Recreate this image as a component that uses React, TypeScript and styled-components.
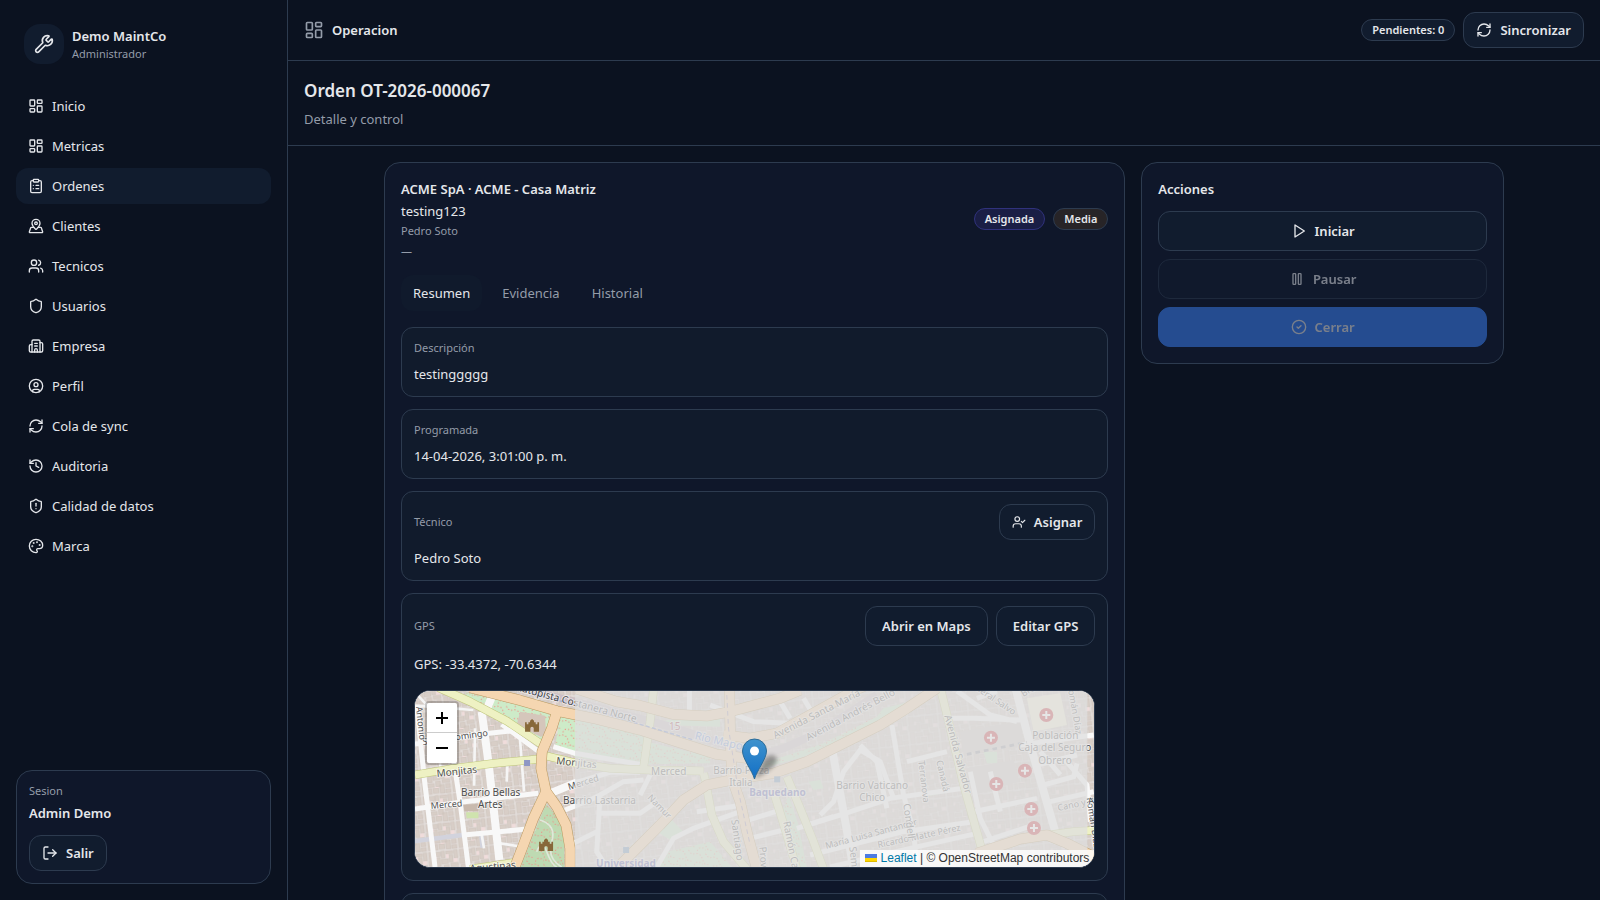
import React from "react";
import styled, { createGlobalStyle, css } from "styled-components";
import {
  Building2,
  CircleCheck,
  CircleUser,
  ClipboardList,
  History,
  LayoutDashboard,
  LogOut,
  MapPinned,
  Palette,
  RefreshCw,
  Shield,
  ShieldAlert,
  UserCheck,
  Users,
  Wrench,
} from "lucide-react";

const color = {
  page: "#0b1220",
  card: "#0f172a",
  raised: "#111c2e",
  border: "#2d3b4f",
  text: "#e5e7eb",
  muted: "#949ca9",
  primary: "#3b82f6",
};

const GlobalStyle = createGlobalStyle`
  *, *::before, *::after { box-sizing: border-box; }
  body {
    margin: 0;
    background: ${color.page};
    color: ${color.text};
    font-family: "Segoe UI", "Noto Sans", sans-serif;
    font-size: 13px;
    line-height: 20px;
  }
  h1, h2, h3, p, ul, dl, dd { margin: 0; padding: 0; }
  button { font: inherit; color: inherit; cursor: pointer; }
`;

/* ---------- Shell ---------- */

const Shell = styled.div`
  display: grid;
  grid-template-columns: 288px minmax(0, 1fr);
  height: 100vh;
`;

const Sidebar = styled.aside`
  display: flex;
  flex-direction: column;
  min-height: 0;
  padding: 16px;
  border-right: 1px solid ${color.border};
`;

const Brand = styled.div`
  display: flex;
  align-items: center;
  gap: 8px;
  padding: 8px;
`;

const BrandMark = styled.div`
  display: grid;
  place-items: center;
  width: 40px;
  height: 40px;
  border-radius: 16px;
  background: ${color.raised};
`;

const Strong = styled.div`
  font-weight: 600;
`;

const Small = styled.div`
  font-size: 11px;
  line-height: 16px;
  color: ${color.muted};
`;

const NavList = styled.ul`
  display: flex;
  flex: 1;
  flex-direction: column;
  gap: 4px;
  margin-top: 16px;
  list-style: none;
`;

const NavLink = styled.a<{ $active?: boolean }>`
  display: flex;
  align-items: center;
  gap: 8px;
  padding: 8px 12px;
  border-radius: 12px;
  color: ${color.text};
  text-decoration: none;
  background: ${(p) => (p.$active ? color.raised : "transparent")};
`;

const Session = styled.section`
  display: flex;
  flex-direction: column;
  align-items: flex-start;
  padding: 12px;
  border: 1px solid ${color.border};
  border-radius: 16px;
  background: ${color.card};
`;

const SessionUser = styled(Strong)`
  margin: 4px 0 12px;
`;

const Button = styled.button<{ $size?: "sm" | "md"; $primary?: boolean }>`
  display: inline-flex;
  align-items: center;
  justify-content: center;
  gap: 8px;
  height: ${(p) => (p.$size === "sm" ? 36 : 40)}px;
  padding: 0 ${(p) => (p.$size === "sm" ? 12 : 16)}px;
  border: 1px solid ${(p) => (p.$primary ? color.primary : color.border)};
  border-radius: 12px;
  background: ${(p) => (p.$primary ? color.primary : color.raised)};
  font-weight: 600;
  white-space: nowrap;
  &:disabled {
    opacity: 0.5;
    cursor: default;
  }
`;

/* ---------- Main column ---------- */

const Main = styled.main`
  min-width: 0;
  overflow-y: auto;
  scrollbar-width: none;
`;

const TopBar = styled.header`
  display: flex;
  align-items: center;
  justify-content: space-between;
  padding: 12px 16px;
  border-bottom: 1px solid ${color.border};
`;

const Row = styled.div`
  display: flex;
  align-items: center;
  gap: 8px;
`;

const MutedIcon = styled.span`
  display: flex;
  color: ${color.muted};
`;

const Badge = styled.span<{ $tone?: "assigned" | "medium" }>`
  padding: 2px 10px;
  border: 1px solid ${color.border};
  border-radius: 999px;
  background: ${color.raised};
  font-size: 11px;
  line-height: 16px;
  font-weight: 600;
  ${(p) =>
    p.$tone === "assigned" &&
    css`
      border-color: #30327c;
      background: #1a1e45;
    `}
  ${(p) =>
    p.$tone === "medium" &&
    css`
      background: #272427;
    `}
`;

const PageHead = styled.div`
  padding: 16px;
  border-bottom: 1px solid ${color.border};
`;

const Title = styled.h1`
  font-size: 17px;
  line-height: 28px;
  font-weight: 600;
`;

const Subtitle = styled.p`
  margin-top: 4px;
  color: ${color.muted};
`;

const Content = styled.div`
  display: grid;
  grid-template-columns: repeat(3, minmax(0, 1fr));
  align-items: start;
  gap: 16px;
  max-width: 1152px;
  margin: 0 auto;
  padding: 16px;
`;

const Card = styled.section<{ $wide?: boolean }>`
  grid-column: span ${(p) => (p.$wide ? 2 : 1)};
  padding: 16px;
  border: 1px solid ${color.border};
  border-radius: 16px;
  background: ${color.card};
`;

const CardHead = styled.div`
  display: flex;
  align-items: center;
  justify-content: space-between;
`;

const Heading = styled.h2`
  font-size: 13px;
  line-height: 20px;
  font-weight: 600;
`;

const OrderInfo = styled.div`
  display: flex;
  flex-direction: column;
  gap: 2px;
`;

const Schedule = styled(Small)`
  padding-top: 2px;
`;

const Tabs = styled.div`
  display: flex;
  gap: 8px;
  margin: 16px 0;
`;

const Tab = styled.button`
  height: 36px;
  padding: 0 12px;
  border: 0;
  border-radius: 12px;
  background: transparent;
  color: ${color.muted};
  &[aria-selected="true"] {
    background: #101a2c;
    color: ${color.text};
  }
`;

const Panels = styled.div`
  display: flex;
  flex-direction: column;
  gap: 12px;
`;

const Panel = styled.section`
  padding: 12px;
  border: 1px solid ${color.border};
  border-radius: 12px;
  background: #111b2c;
`;

const PanelValue = styled.p`
  margin-top: 8px;
`;

const Actions = styled.div`
  display: grid;
  gap: 8px;
  margin-top: 12px;
`;

/* ---------- Map ---------- */

const MapFrame = styled.div`
  position: relative;
  height: 178px;
  margin-top: 16px;
  overflow: hidden;
  border: 1px solid ${color.border};
  border-radius: 16px;
  background: #ddd;
`;

const MapCanvas = styled.svg`
  display: block;
  width: 100%;
  height: 100%;
`;

const ZoomControl = styled.div`
  position: absolute;
  top: 10px;
  left: 10px;
  border: 2px solid rgba(0, 0, 0, 0.2);
  border-radius: 4px;
  background-clip: padding-box;
`;

const ZoomButton = styled.button`
  display: grid;
  place-items: center;
  width: 30px;
  height: 30px;
  padding: 0;
  border: 0;
  border-radius: 0 0 2px 2px;
  background: #fff;
  color: #000;
  &:first-child {
    border-bottom: 1px solid #ccc;
    border-radius: 2px 2px 0 0;
  }
`;

const Marker = styled.svg`
  position: absolute;
  top: 47px;
  left: calc(50% - 13px);
`;

const Attribution = styled.div`
  position: absolute;
  right: 0;
  bottom: 0;
  padding: 0 5px;
  background: rgba(255, 255, 255, 0.8);
  color: #333;
  font-family: "Liberation Sans", Arial, sans-serif;
  font-size: 12px;
  line-height: 17px;
  a {
    color: #0078a8;
    text-decoration: none;
  }
  svg {
    margin-right: 4px;
  }
`;

type RoadKind = "street" | "secondary" | "primary" | "lane";

const roadStyle: Record<RoadKind, { fill: string; edge: string; width: number }> = {
  street: { fill: "#f8f8f8", edge: "#d5cec8", width: 15 },
  lane: { fill: "#f5f5f5", edge: "#d5cec8", width: 8 },
  secondary: { fill: "#eef1c3", edge: "#bfc67c", width: 22 },
  primary: { fill: "#f5d6b1", edge: "#b99a62", width: 29 },
};

const roads: [RoadKind, string][] = [
  ["lane", "M195 130L192 302M90 235L92 250M292 240L290 290M330 165L342 320M270 475L342 486M215 450L222 490M15 62L190 75M15 22L60 70"],
  ["street", "M15 372L150 352L385 325M15 177L190 150L325 135M160 450L375 430M20 60L45 300L75 546M125 190L150 350L175 546M275 118L395 206"],
  ["street", "M420 328L500 292L600 262L690 262M465 375L540 345L570 330L640 290L700 285M570 330L560 500L590 546M490 475L560 440M430 185L495 205L700 240"],
  ["street", "M565 385H690L740 350M690 330L720 270M740 546L790 460L850 430L990 380M860 380L1000 360M1000 410L1110 375M1020 460L1120 435M890 270L875 300"],
  ["street", "M838 18V85M1110 50L1140 100M1180 40L1210 90M900 60L1030 110L1140 115M1190 420L1290 390L1440 340L1660 310M1230 390L1270 350L1300 260L1350 195L1410 230L1450 340"],
  ["street", "M1160 430L1270 395M1200 510L1480 440L1690 410M1260 546L1500 490L1700 445M1445 120L1480 330L1510 440L1520 546M1490 230L1610 200M1350 180L1400 230L1430 370"],
  ["street", "M1620 100H1690L1830 105M1640 18L1740 90L1820 110M1830 180L2050 150M1880 240L2000 210M1900 300L1990 275L2000 235M1920 350L2050 320M1720 470L1870 420M1760 18L1700 40"],
  ["street", "M1680 260L1710 400L1750 480M1740 260L1770 380M1690 380L1880 340M1890 200L1950 270M1960 220L2030 300L2040 410"],
  ["secondary", "M85 8L180 50L290 108L400 182"],
  ["secondary", "M15 270L120 252L250 235L390 222M410 213L500 235L600 250L720 255L880 258M180 552L330 530"],
  ["secondary", "M730 18L720 110L700 250M890 310L905 390L940 470L1010 552M1090 320L1115 400L1160 552M1130 275L1170 370L1210 470L1240 552M880 265L890 300"],
  ["secondary", "M1590 8L1615 110L1660 300L1715 495M1910 450L1990 440L2052 436"],
  ["primary", "M500 12L620 50L690 62L790 88L890 93L960 80L1110 40L1170 15"],
  ["primary", "M180 8L330 46L440 78L560 102L690 135L800 170L920 208L1010 220"],
  ["primary", "M958 8L960 130L965 280L990 350L1010 440L1040 552"],
  ["primary", "M940 150L1020 160L1100 145L1200 90L1330 18L1370 0"],
  ["primary", "M440 82L425 130L396 200L393 250L408 320L370 400L340 480L312 552M408 320L440 365L468 420L480 490V552"],
  ["primary", "M600 570L680 490L750 420L820 345L890 300L990 280L1090 265L1190 230L1290 180L1410 120L1490 70L1580 10"],
  ["primary", "M1700 505L1830 462L1910 450L1970 475L2060 520"],
];

const wideStreets = "M215 80L235 230L268 525M247 32L228 78M1268 205L1300 380L1330 552M1815 8L1860 180L1945 475M420 325L500 292";

type Label = [text: string, x: number, y: number, size: number, angle: number, tone?: string, bold?: boolean];

const labels: Label[] = [
  ["Autopista Costanera Norte", 100, -1, 10, 15, "#444"],
  ["Monjitas", 22, 86, 10, -6],
  ["Monjitas", 141, 73, 10, 6],
  ["Barrio Bellas", 46, 105, 10, 0],
  ["Artes", 63, 117, 10, 0],
  ["Merced", 16, 118, 9, -5],
  ["Merced", 154, 99, 9, -17],
  ["Santo Domingo", 8, 54, 9, -8],
  ["Antonio", 1, 16, 9, 84],
  ["Agustinas", 55, 181, 10, -5],
  ["Barrio Lastarria", 148, 113, 10, 0],
  ["Universidad", 181, 176, 10, 0, "#5c5fae", true],
  ["15", 254, 39, 10, 0, "#a33a48"],
  ["Río Mapocho", 279, 48, 11, 13, "#6c8fd6"],
  ["Merced", 236, 84, 10, 0],
  ["Barrio Plaza", 298, 83, 10, 0],
  ["Italia", 314, 95, 10, 0],
  ["Baquedano", 334, 105, 10, 0, "#5c5fae", true],
  ["Namur", 232, 107, 9, 46],
  ["Santiago", 316, 129, 10, 82],
  ["Provi", 344, 156, 10, 85],
  ["Ramón Carnicer", 368, 131, 10, 79],
  ["Avenida Santa María", 360, 48, 10, -27],
  ["Avenida Andrés Bello", 393, 50, 10, -28],
  ["Barrio Vaticano", 421, 98, 10, 0],
  ["Chico", 444, 110, 10, 0],
  ["María Luisa Santander", 411, 158, 9, -15],
  ["Ricardo Matte Pérez", 463, 157, 9, -12],
  ["Condell", 488, 113, 10, 82],
  ["Terranova", 503, 70, 9, 83],
  ["Canadá", 521, 70, 9, 77],
  ["Seminario", 434, 156, 10, 83],
  ["Avenida Salvador", 529, 25, 10, 75],
  ["General Salvo", 550, -8, 9, 34],
  ["Bravo", 608, 6, 9, -30],
  ["Román Díaz", 652, -6, 9, 80],
  ["Román Díaz", 671, 107, 9, 81],
  ["Población", 617, 48, 10, 0],
  ["Caja del Seguro", 603, 60, 10, 0],
  ["Obrero", 623, 73, 10, 0],
  ["Cano y A", 643, 120, 9, -12],
];

const hospitals = [
  [1742, 158],
  [1908, 90],
  [1844, 257],
  [1758, 297],
  [1863, 372],
  [1871, 429],
];

const castle =
  "M-21 -10V18H-5V8A5 5 0 0 1 5 8V18H21V-10H16V-4H11V-10H6V-15L0 -20L-6 -15V-10H-11V-4H-16V-10Z";

function CityMap() {
  return (
    <MapCanvas viewBox="0 0 679 176" preserveAspectRatio="xMidYMid slice" role="img" aria-label="Mapa">
      <defs>
        <pattern id="blocks" width="92" height="84" patternUnits="userSpaceOnUse" patternTransform="rotate(-6)">
          <rect width="92" height="84" fill="#e2dcd9" />
          <g fill="#d8cec7" stroke="#c3b7ae" strokeWidth="1">
            <path d="M3 2h15v22H3zM20 4h18v12H20zM40 2h10v20H40zM54 3h21v9H54zM78 2h11v24H78z" />
            <path d="M2 28h20v16H2zM25 20h11v26H25zM39 26h20v14H39zM62 16h12v20H62zM66 40h22v10H66z" />
            <path d="M4 48h14v32H4zM21 50h20v10H21zM23 64h9v17H23zM36 64h17v15H36zM46 44h14v16H46zM57 55h14v26H57zM75 54h14v12H75zM74 70h15v11H74z" />
          </g>
          <path d="M54 12h8v12H54zM20 16h5v10H20zM75 27h12v11H75zM42 61h12v3H42z" fill="#f0dcdb" />
        </pattern>
        <pattern id="paths" width="52" height="44" patternUnits="userSpaceOnUse" patternTransform="rotate(12)">
          <path
            d="M0 12Q20 0 30 20T52 32M10 44Q14 24 34 36M36 2Q44 14 50 8"
            fill="none"
            stroke="#ee8f88"
            strokeWidth="3"
            strokeDasharray="4 6"
          />
        </pattern>
      </defs>

      <g transform="translate(-5 -6) scale(0.33333)">
        <rect width="2100" height="570" fill="#e0dfdf" />
        <rect width="2100" height="570" fill="url(#blocks)" />

        <g fill="#cdebc8">
          <path d="M165 22L430 78L418 130L395 172L250 92L180 50Z" />
          <path d="M450 95L700 150L700 238L500 218L436 178Z" />
          <path d="M408 358L448 400L462 460L462 552H330L366 460Z" fill="#bedab2" />
          <path d="M710 170L900 215V235L700 238ZM740 110L930 85V125L760 120Z" />
          <path d="M1060 235L1240 175L1400 95L1420 70L1500 50L1400 110L1280 170L1180 215L1060 250Z" />
          <path d="M1135 330L1165 420L1190 552H1165L1110 400ZM780 400L820 440L790 470L740 440ZM770 500L900 470L970 552H740Z" />
          <path d="M1195 290L1230 285L1240 310L1210 315ZM1720 200H1760V235H1730ZM1550 320L1600 315V325L1560 332Z" />
        </g>
        <path
          d="M165 22L430 78L395 172L250 92ZM450 95L700 150V238L500 218L436 178ZM408 358L448 400L462 552H330L366 460ZM710 170L900 215V235L700 238ZM1060 235L1240 175L1420 80L1280 170L1060 250ZM1135 330L1190 552H1165L1110 400ZM770 500L900 470L970 552H740Z"
          fill="url(#paths)"
        />
        <path d="M330 80L405 92L408 150L392 155L320 120Z" fill="#d5c6bb" />
        <path d="M160 360L205 356V378H163Z" fill="#c8b9ad" />
        <path d="M168 382H205V400H170Z" fill="#cfe3ae" />
        <path d="M15 468L158 450M214 450L218 488" stroke="#d2d3dd" strokeWidth="14" />
        <path d="M390 405Q440 420 425 470T455 546M380 500Q395 460 410 500T440 546" fill="none" stroke="#dfe8da" strokeWidth="5" />
        <path d="M1650 140L1830 108L1840 180L1660 205ZM1670 250L1810 225L1825 290L1690 330Z" fill="#d3ccc7" />
        <path d="M1850 40L1950 25L1970 120L1870 140Z" fill="#f4f3d7" />

        <path
          d="M360 18L500 52L640 88L780 125L960 185L1050 210L1120 190L1220 145L1300 95L1400 30"
          fill="none"
          stroke="#cbbfc6"
          strokeWidth="24"
        />
        {(["lane", "street"] as RoadKind[]).map((kind) =>
          roads
            .filter((r) => r[0] === kind)
            .map(([, d], i) => (
              <path key={kind + i} d={d} fill="none" stroke={roadStyle[kind].fill} strokeWidth={roadStyle[kind].width} />
            ))
        )}
        <path d={wideStreets} fill="none" stroke="#f8f8f8" strokeWidth="24" />
        {(["secondary", "primary"] as RoadKind[]).map((kind) => (
          <g key={kind} fill="none" strokeLinejoin="round">
            {roads
              .filter((r) => r[0] === kind)
              .map(([, d], i) => (
                <path key={i} d={d} stroke={roadStyle[kind].edge} strokeWidth={roadStyle[kind].width + 3} />
              ))}
            {roads
              .filter((r) => r[0] === kind)
              .map(([, d], i) => (
                <path key={i} d={d} stroke={roadStyle[kind].fill} strokeWidth={roadStyle[kind].width} />
              ))}
          </g>
        ))}
        <path d="M360 24L500 60L690 118L850 165" fill="none" stroke="#6f86cc" strokeWidth="4" strokeDasharray="12 7" />
        <path d="M950 30L955 130L985 320L1020 480" fill="none" stroke="#9d8fb0" strokeWidth="3" strokeDasharray="14 10" />
        <path d="M1670 208L1850 172" stroke="#9a9aa5" strokeWidth="8" strokeDasharray="14 12" />

        <g fill="#8e97c4">
          <rect x="342" y="225" width="18" height="18" />
          <rect x="639" y="486" width="18" height="18" fill="#6d93b8" />
          <rect x="1092" y="274" width="18" height="18" fill="#6d93b8" />
        </g>
        <g fill="#87683a">
          <path transform="translate(366 122)" d={castle} />
          <path transform="translate(408 480)" d={castle} />
        </g>
        {hospitals.map(([x, y]) => (
          <g key={`${x}-${y}`} transform={`translate(${x} ${y})`}>
            <circle r="21" fill="#c9343c" />
            <path d="M-12 0H12M0 -12V12" stroke="#fff" strokeWidth="6" />
          </g>
        ))}
      </g>

      <g
        fontFamily="'Noto Sans', sans-serif"
        stroke="#fff"
        strokeOpacity="0.6"
        strokeWidth="2"
        paintOrder="stroke"
        strokeLinejoin="round"
      >
        {labels.map(([text, x, y, size, angle, tone, bold], i) => (
          <text
            key={i}
            transform={`translate(${x} ${y}) rotate(${angle})`}
            fontSize={size}
            fill={tone ?? "#4f4f4f"}
            fontWeight={bold ? 700 : 400}
          >
            {text}
          </text>
        ))}
      </g>

      <rect x="160" y="0" width="512" height="176" fill="#dedede" fillOpacity="0.76" />
    </MapCanvas>
  );
}

/* ---------- Icons drawn here ---------- */

type GlyphProps = { children: React.ReactNode };

function Glyph({ children }: GlyphProps) {
  return (
    <svg
      width="16"
      height="16"
      viewBox="0 0 24 24"
      fill="none"
      stroke="currentColor"
      strokeWidth="2"
      strokeLinecap="round"
      strokeLinejoin="round"
      aria-hidden="true"
    >
      {children}
    </svg>
  );
}

const PlayGlyph = () => (
  <Glyph>
    <polygon points="6 3 20 12 6 21 6 3" />
  </Glyph>
);

const PauseGlyph = () => (
  <Glyph>
    <rect x="14" y="4" width="4" height="16" rx="1" />
    <rect x="6" y="4" width="4" height="16" rx="1" />
  </Glyph>
);

/* ---------- Page ---------- */

const navItems = [
  { label: "Inicio", icon: LayoutDashboard },
  { label: "Metricas", icon: LayoutDashboard },
  { label: "Ordenes", icon: ClipboardList, active: true },
  { label: "Clientes", icon: MapPinned },
  { label: "Tecnicos", icon: Users },
  { label: "Usuarios", icon: Shield },
  { label: "Empresa", icon: Building2 },
  { label: "Perfil", icon: CircleUser },
  { label: "Cola de sync", icon: RefreshCw },
  { label: "Auditoria", icon: History },
  { label: "Calidad de datos", icon: ShieldAlert },
  { label: "Marca", icon: Palette },
];

export default function App() {
  return (
    <>
      <GlobalStyle />
      <Shell>
        <Sidebar>
          <Brand>
            <BrandMark>
              <Wrench size={20} />
            </BrandMark>
            <div>
              <Strong>Demo MaintCo</Strong>
              <Small>Administrador</Small>
            </div>
          </Brand>
          <NavList>
            {navItems.map(({ label, icon: Icon, active }) => (
              <li key={label}>
                <NavLink href="#" $active={active} aria-current={active ? "page" : undefined}>
                  <Icon size={16} />
                  {label}
                </NavLink>
              </li>
            ))}
          </NavList>
          <Session>
            <Small>Sesion</Small>
            <SessionUser>Admin Demo</SessionUser>
            <Button $size="sm">
              <LogOut size={16} />
              Salir
            </Button>
          </Session>
        </Sidebar>

        <Main>
          <TopBar>
            <Row>
              <MutedIcon>
                <LayoutDashboard size={20} />
              </MutedIcon>
              <Strong>Operacion</Strong>
            </Row>
            <Row>
              <Badge>Pendientes: 0</Badge>
              <Button $size="sm">
                <RefreshCw size={16} />
                Sincronizar
              </Button>
            </Row>
          </TopBar>

          <PageHead>
            <Title>Orden OT-2026-000067</Title>
            <Subtitle>Detalle y control</Subtitle>
          </PageHead>

          <Content>
            <Card $wide>
              <CardHead>
                <OrderInfo>
                  <Heading>ACME SpA · ACME - Casa Matriz</Heading>
                  <p>testing123</p>
                  <Small>Pedro Soto</Small>
                  <Schedule>—</Schedule>
                </OrderInfo>
                <Row>
                  <Badge $tone="assigned">Asignada</Badge>
                  <Badge $tone="medium">Media</Badge>
                </Row>
              </CardHead>

              <Tabs role="tablist">
                <Tab role="tab" aria-selected="true">Resumen</Tab>
                <Tab role="tab" aria-selected="false">Evidencia</Tab>
                <Tab role="tab" aria-selected="false">Historial</Tab>
              </Tabs>

              <Panels>
                <Panel>
                  <Small>Descripción</Small>
                  <PanelValue>testinggggg</PanelValue>
                </Panel>
                <Panel>
                  <Small>Programada</Small>
                  <PanelValue>14-04-2026, 3:01:00 p. m.</PanelValue>
                </Panel>
                <Panel>
                  <CardHead>
                    <Small>Técnico</Small>
                    <Button $size="sm">
                      <UserCheck size={14} />
                      Asignar
                    </Button>
                  </CardHead>
                  <PanelValue>Pedro Soto</PanelValue>
                </Panel>
                <Panel>
                  <CardHead>
                    <Small>GPS</Small>
                    <Row>
                      <Button>Abrir en Maps</Button>
                      <Button>Editar GPS</Button>
                    </Row>
                  </CardHead>
                  <PanelValue>GPS: -33.4372, -70.6344</PanelValue>
                  <MapFrame>
                    <CityMap />
                    <Marker width="48" height="42" viewBox="0 0 48 42" aria-hidden="true">
                      <defs>
                        <linearGradient id="pin" x1="0" y1="0" x2="0" y2="1">
                          <stop offset="0" stopColor="#3f93cd" />
                          <stop offset="1" stopColor="#126fc6" />
                        </linearGradient>
                        <filter id="pin-shadow" x="-50%" y="-50%" width="200%" height="200%">
                          <feGaussianBlur stdDeviation="2" />
                        </filter>
                      </defs>
                      <path d="M13 41L22 21Q30 14 35 20Q36 28 13 41Z" fill="#000" opacity="0.35" filter="url(#pin-shadow)" />
                      <path
                        d="M12.500 41C10.500 33 0.500 21 0.500 13A12 12 0 0 1 24.500 13C24.500 21 14.500 33 12.500 41Z"
                        fill="url(#pin)"
                        stroke="#2e6c97"
                      />
                      <circle cx="12.500" cy="13" r="4.500" fill="#fff" />
                    </Marker>
                    <ZoomControl>
                      <ZoomButton aria-label="Acercar">
                        <svg width="12" height="12" viewBox="0 0 12 12" aria-hidden="true">
                          <path d="M0 6H12M6 0V12" stroke="#000" strokeWidth="2" />
                        </svg>
                      </ZoomButton>
                      <ZoomButton aria-label="Alejar">
                        <svg width="12" height="12" viewBox="0 0 12 12" aria-hidden="true">
                          <path d="M0 6H12" stroke="#000" strokeWidth="2" />
                        </svg>
                      </ZoomButton>
                    </ZoomControl>
                    <Attribution>
                      <a href="#">
                        <svg width="12" height="8" viewBox="0 0 12 8" aria-hidden="true">
                          <path fill="#4c7be1" d="M0 0h12v4H0z" />
                          <path fill="#ffd500" d="M0 4h12v3H0z" />
                          <path fill="#e0bc00" d="M0 7h12v1H0z" />
                        </svg>
                        Leaflet
                      </a>{" "}
                      | © OpenStreetMap contributors
                    </Attribution>
                  </MapFrame>
                </Panel>
                <Panel>
                  <Small>Notas</Small>
                </Panel>
              </Panels>
            </Card>

            <Card>
              <Heading>Acciones</Heading>
              <Actions>
                <Button>
                  <PlayGlyph />
                  Iniciar
                </Button>
                <Button disabled>
                  <PauseGlyph />
                  Pausar
                </Button>
                <Button $primary disabled>
                  <CircleCheck size={16} />
                  Cerrar
                </Button>
              </Actions>
            </Card>
          </Content>
        </Main>
      </Shell>
    </>
  );
}
